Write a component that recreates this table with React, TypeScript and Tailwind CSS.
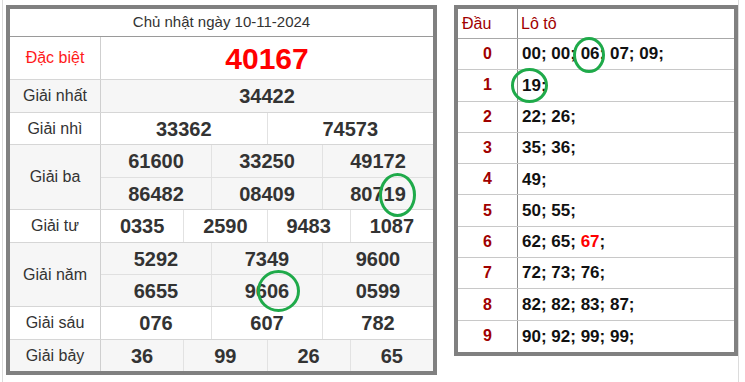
import React from 'react';

type Row = { label: string; values: string[][]; gray: boolean; h: number[]; red?: boolean };

const rows: Row[] = [
  { label: 'Đặc biệt', values: [['40167']], gray: false, h: [43], red: true },
  { label: 'Giải nhất', values: [['34422']], gray: true, h: [33] },
  { label: 'Giải nhì', values: [['33362', '74573']], gray: false, h: [32] },
  { label: 'Giải ba', values: [['61600', '33250', '49172'], ['86482', '08409', '80719']], gray: true, h: [33, 32] },
  { label: 'Giải tư', values: [['0335', '2590', '9483', '1087']], gray: false, h: [33] },
  { label: 'Giải năm', values: [['5292', '7349', '9600'], ['6655', '9606', '0599']], gray: true, h: [32, 32] },
  { label: 'Giải sáu', values: [['076', '607', '782']], gray: false, h: [33] },
  { label: 'Giải bảy', values: [['36', '99', '26', '65']], gray: true, h: [31] },
];

const loto: { dau: string; items: { v: string; hot?: boolean }[] }[] = [
  { dau: '0', items: [{ v: '00' }, { v: '00' }, { v: '06' }, { v: '07' }, { v: '09' }] },
  { dau: '1', items: [{ v: '19' }] },
  { dau: '2', items: [{ v: '22' }, { v: '26' }] },
  { dau: '3', items: [{ v: '35' }, { v: '36' }] },
  { dau: '4', items: [{ v: '49' }] },
  { dau: '5', items: [{ v: '50' }, { v: '55' }] },
  { dau: '6', items: [{ v: '62' }, { v: '65' }, { v: '67', hot: true }] },
  { dau: '7', items: [{ v: '72' }, { v: '73' }, { v: '76' }] },
  { dau: '8', items: [{ v: '82' }, { v: '82' }, { v: '83' }, { v: '87' }] },
  { dau: '9', items: [{ v: '90' }, { v: '92' }, { v: '99' }, { v: '99' }] },
];

const ResultTable = () => (
  <div className="w-[431px] border-4 border-[#808080] bg-white">
    <div className="h-[28px] flex items-center justify-center border-b border-[#9a9a9a] text-[15px] text-[#333]">
      Chủ nhật ngày 10-11-2024
    </div>
    {rows.map((row, ri) => {
      const lastRow = ri === rows.length - 1;
      return (
        <div
          key={row.label}
          className={`flex ${!lastRow ? 'border-b border-[#d6d6d6]' : ''} ${row.gray ? 'bg-[#f6f6f6]' : 'bg-white'}`}
        >
          <div
            className={`w-[91px] shrink-0 border-r border-[#cfcfcf] flex items-center justify-center text-[16px] ${row.red ? 'text-[#ff1a1a]' : 'text-[#333]'}`}
          >
            {row.label}
          </div>
          <div className="flex-1 flex flex-col">
            {row.values.map((line, li) => {
              const lastLine = li === row.values.length - 1;
              // the row's own bottom border takes one pixel of the last line
              const height = lastLine && !lastRow ? row.h[li] - 1 : row.h[li];
              return (
                <div
                  key={li}
                  style={{ height }}
                  className={`flex ${!lastLine ? 'border-b border-[#e0e0e0]' : ''}`}
                >
                  {line.map((v, vi) => (
                    <div
                      key={vi}
                      className={`flex-1 flex items-center justify-center font-bold ${vi > 0 ? 'border-l border-[#e2e2e2]' : ''} ${row.red ? 'text-[30px] text-[#ff0000]' : 'text-[20px] text-[#333]'}`}
                    >
                      {v}
                    </div>
                  ))}
                </div>
              );
            })}
          </div>
        </div>
      );
    })}
  </div>
);

const LotoTable = () => (
  <div className="w-[284px] border-4 border-[#808080] bg-white">
    <div className="h-[30px] flex border-b border-[#a8a8a8] text-[16px] text-[#a00000]">
      <div className="w-[60px] border-r border-[#8c8c8c] flex items-center pl-[4px]">Đầu</div>
      <div className="flex-1 flex items-center pl-[3px]">Lô tô</div>
    </div>
    {loto.map((r, i) => (
      <div
        key={r.dau}
        className={`h-[31.3px] flex ${i < loto.length - 1 ? 'border-b border-[#c8c8c8]' : ''}`}
      >
        <div className="w-[60px] border-r border-[#8c8c8c] flex items-center justify-center font-bold text-[16px] text-[#a00000]">
          {r.dau}
        </div>
        <div className="flex-1 flex items-center pl-[4px] font-bold text-[17px] text-[#111] whitespace-pre">
          {r.items.map((it, k) => (
            <span key={k}>
              <span className={it.hot ? 'text-[#ff0000]' : ''}>{it.v}</span>
              {k < r.items.length - 1 ? '; ' : ';'}
            </span>
          ))}
        </div>
      </div>
    ))}
  </div>
);

export default function App() {
  return (
    <div className="relative w-[745px] h-[382px] bg-white overflow-hidden font-['Liberation_Sans',Arial,sans-serif]">
      <div className="flex h-full">
        <div className="ml-[2px] border-l border-[#dcdcdc] pl-[3px] pt-[5px]">
          <ResultTable />
        </div>
        <div className="ml-[17px] pt-[5px] border-r border-[#dcdcdc] h-full">
          <LotoTable />
        </div>
      </div>
      <svg className="absolute inset-0 pointer-events-none" width="745" height="382">
        <g fill="none" stroke="#1faa4a" strokeWidth="3">
          <ellipse cx="397.5" cy="195" rx="17" ry="20.5" />
          <ellipse cx="278.5" cy="291" rx="20" ry="19.5" />
          <ellipse cx="589" cy="55" rx="14.5" ry="16.5" />
          <ellipse cx="529.5" cy="85.5" rx="17" ry="16" />
        </g>
      </svg>
    </div>
  );
}
